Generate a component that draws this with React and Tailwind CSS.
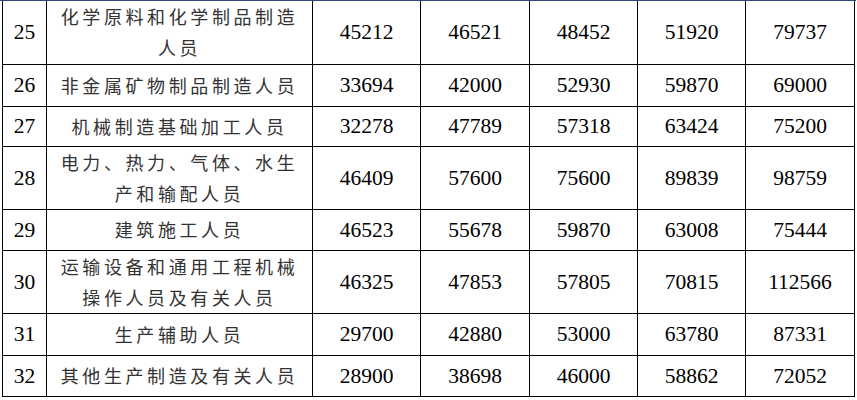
import React from 'react'

const rows = [
  { no: 25, name: '化学原料和化学制品制造人员', vals: [45212, 46521, 48452, 51920, 79737], h: 'h-[63px]' },
  { no: 26, name: '非金属矿物制品制造人员', vals: [33694, 42000, 52930, 59870, 69000], h: 'h-[42px]' },
  { no: 27, name: '机械制造基础加工人员', vals: [32278, 47789, 57318, 63424, 75200], h: 'h-[40px]' },
  { no: 28, name: '电力、热力、气体、水生产和输配人员', vals: [46409, 57600, 75600, 89839, 98759], h: 'h-[63px]' },
  { no: 29, name: '建筑施工人员', vals: [46523, 55678, 59870, 63008, 75444], h: 'h-[41px]' },
  { no: 30, name: '运输设备和通用工程机械操作人员及有关人员', vals: [46325, 47853, 57805, 70815, 112566], h: 'h-[63px]' },
  { no: 31, name: '生产辅助人员', vals: [29700, 42880, 53000, 63780, 87331], h: 'h-[42px]' },
  { no: 32, name: '其他生产制造及有关人员', vals: [28900, 38698, 46000, 58862, 72052], h: 'h-[41px]' },
]

const num = "font-[family-name:Liberation_Serif,Times_New_Roman,serif] text-[21.5px] leading-[24px] text-black"

export default function App() {
  return (
    <div className="w-[857px] h-[400px] bg-white">
      <div className="h-px w-[856px] bg-[#2c4a7c]" />
      <table className="ml-[2px] w-[852px] table-fixed border-collapse">
        <colgroup>
          <col className="w-[44px]" />
          <col className="w-[266px]" />
          <col className="w-[108px]" />
          <col className="w-[109px]" />
          <col className="w-[108px]" />
          <col className="w-[108px]" />
          <col className="w-[109px]" />
        </colgroup>
        <tbody>
          {rows.map((r, i) => (
            <tr key={r.no} className={r.h}>
              <td className={`border border-black p-0 text-center ${i === 0 ? 'border-t-0' : ''} ${num}`}>{r.no}</td>
              <td
                className={`border border-black px-[10px] py-0 text-center ${i === 0 ? 'border-t-0' : ''} font-[family-name:Noto_Sans_CJK_SC,sans-serif] text-[18px] leading-[31px] tracking-[3.6px] text-[#333]`}
              >
                {r.name}
              </td>
              {r.vals.map((v, j) => (
                <td key={j} className={`border border-black p-0 text-center ${i === 0 ? 'border-t-0' : ''} ${num}`}>
                  {v}
                </td>
              ))}
            </tr>
          ))}
        </tbody>
      </table>
    </div>
  )
}
